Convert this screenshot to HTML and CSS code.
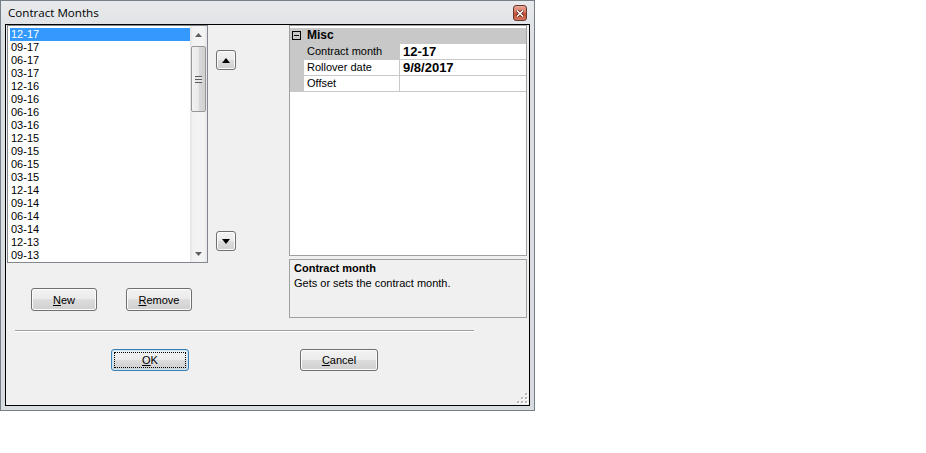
FILE: index.html
```html
<!DOCTYPE html>
<html>

<head>
    <title>Contract Months</title>
    <link rel="stylesheet" href="styles.css">
</head>

<body>
    <div class="window">
        <div class="titlebar">
            <span class="title">Contract Months</span>
            <span class="close-btn">
                <svg width="8" height="7" viewBox="0 0 8 7">
                    <path d="M1 0.5 L7 6.5 M7 0.5 L1 6.5" stroke="#4a1a10" stroke-width="3" />
                    <path d="M1 0.5 L7 6.5 M7 0.5 L1 6.5" stroke="#fff" stroke-width="1.6" />
                </svg>
            </span>
        </div>
        <div class="client">
            <div class="top">
                <div class="left-part">
                    <div class="list-row">
                        <div class="listbox">
                            <ul class="items">
                                <li class="selected">12-17</li>
                                <li>09-17</li>
                                <li>06-17</li>
                                <li>03-17</li>
                                <li>12-16</li>
                                <li>09-16</li>
                                <li>06-16</li>
                                <li>03-16</li>
                                <li>12-15</li>
                                <li>09-15</li>
                                <li>06-15</li>
                                <li>03-15</li>
                                <li>12-14</li>
                                <li>09-14</li>
                                <li>06-14</li>
                                <li>03-14</li>
                                <li>12-13</li>
                                <li>09-13</li>
                            </ul>
                            <div class="scrollbar">
                                <div class="sb-arrow">
                                    <svg width="7" height="4" viewBox="0 0 7 4"><path d="M0 4 L3.5 0 L7 4 Z" fill="#606060" /></svg>
                                </div>
                                <div class="sb-track">
                                    <div class="sb-thumb"><span class="grip-lines"></span></div>
                                </div>
                                <div class="sb-arrow">
                                    <svg width="7" height="4" viewBox="0 0 7 4"><path d="M0 0 L3.5 4 L7 0 Z" fill="#606060" /></svg>
                                </div>
                            </div>
                        </div>
                        <div class="move-buttons">
                            <button class="btn arrow-btn move-up">
                                <svg width="8" height="5" viewBox="0 0 8 5"><path d="M0 5 L4 0 L8 5 Z" fill="#000" /></svg>
                            </button>
                            <button class="btn arrow-btn move-down">
                                <svg width="8" height="5" viewBox="0 0 8 5"><path d="M0 0 L4 5 L8 0 Z" fill="#000" /></svg>
                            </button>
                        </div>
                    </div>
                    <div class="list-buttons">
                        <button class="btn small-btn"><u>N</u>ew</button>
                        <button class="btn small-btn"><u>R</u>emove</button>
                    </div>
                </div>
                <div class="right-part">
                    <div class="propgrid">
                        <div class="pg-row pg-category">
                            <span class="pg-margin"><span class="expander"></span></span>
                            <span class="pg-cat-name">Misc</span>
                        </div>
                        <div class="pg-row pg-selected">
                            <span class="pg-margin"></span>
                            <span class="pg-label">Contract month</span>
                            <span class="pg-value">12-17</span>
                        </div>
                        <div class="pg-row">
                            <span class="pg-margin"></span>
                            <span class="pg-label">Rollover date</span>
                            <span class="pg-value">9/8/2017</span>
                        </div>
                        <div class="pg-row">
                            <span class="pg-margin"></span>
                            <span class="pg-label">Offset</span>
                            <span class="pg-value"></span>
                        </div>
                    </div>
                    <div class="description">
                        <div class="desc-title">Contract month</div>
                        <div class="desc-text">Gets or sets the contract month.</div>
                    </div>
                </div>
            </div>
            <div class="separator"></div>
            <div class="dialog-buttons">
                <button class="btn dialog-btn default-btn"><u>O</u>K</button>
                <button class="btn dialog-btn"><u>C</u>ancel</button>
            </div>
            <div class="size-grip">
                <svg width="11" height="11" viewBox="0 0 11 11">
                    <g fill="#fff">
                        <rect x="9" y="1" width="2" height="2" />
                        <rect x="9" y="5" width="2" height="2" />
                        <rect x="5" y="5" width="2" height="2" />
                        <rect x="9" y="9" width="2" height="2" />
                        <rect x="5" y="9" width="2" height="2" />
                        <rect x="1" y="9" width="2" height="2" />
                    </g>
                    <g fill="#b8b8b8">
                        <rect x="8" y="0" width="2" height="2" />
                        <rect x="8" y="4" width="2" height="2" />
                        <rect x="4" y="4" width="2" height="2" />
                        <rect x="8" y="8" width="2" height="2" />
                        <rect x="4" y="8" width="2" height="2" />
                        <rect x="0" y="8" width="2" height="2" />
                    </g>
                </svg>
            </div>
        </div>
    </div>
</body>

</html>
```

FILE: styles.css
```css
body {
    margin: 0;
    background: #fff;
    font-family: "Liberation Sans", Arial, sans-serif;
    font-size: 11px;
    color: #000;
}

/* window frame */

.window {
    width: 535px;
    height: 411px;
    box-sizing: border-box;
    border: 1px solid #767e88;
    padding: 0 4px 4px;
    display: flex;
    flex-direction: column;
    background: linear-gradient(to bottom, #e8eaec, #dcdfe2 40px, #d8dbdf);
}

.titlebar {
    height: 23px;
    display: flex;
    align-items: flex-start;
    justify-content: space-between;
}

.title {
    font-family: "Segoe UI", "Open Sans", sans-serif;
    font-size: 11.6px;
    line-height: 16px;
    margin: 4px 0 0 3px;
}

.close-btn {
    width: 14px;
    height: 16px;
    box-sizing: border-box;
    margin: 4px 3px 0 0;
    border: 1px solid #6b3a32;
    border-radius: 3px;
    background: linear-gradient(to bottom, #e9a99a, #d6725c 45%, #c24c31 55%, #d2765d);
    display: flex;
    align-items: center;
    justify-content: center;
}

.client {
    flex: 1;
    border: 1px solid #000;
    background: #f0f0f0;
    position: relative;
}

/* top area */

.top {
    display: flex;
}

.left-part {
    width: 283px;
}

.list-row {
    display: flex;
    margin-left: 1px;
}

.listbox {
    width: 201px;
    height: 238px;
    box-sizing: border-box;
    border: 1px solid #828790;
    background: #fff;
    display: flex;
}

.items {
    flex: 1;
    list-style: none;
    margin: 0;
    padding: 2px 0 0 2px;
    overflow: hidden;
}

.items li {
    height: 13px;
    line-height: 13px;
    padding-left: 1px;
}

.items li.selected {
    background: #3399ff;
    color: #fff;
}

.scrollbar {
    width: 17px;
    display: flex;
    flex-direction: column;
    background: linear-gradient(to right, #e3e3e3, #f2f2f2 3px, #f4f4f4 14px, #e6e6e6);
}

.sb-arrow {
    height: 17px;
    display: flex;
    align-items: center;
    justify-content: center;
}

.sb-track {
    flex: 1;
}

.sb-thumb {
    height: 66px;
    margin: 3px 1px 0;
    box-sizing: border-box;
    border: 1px solid #979797;
    border-radius: 2px;
    background: linear-gradient(to right, #f3f3f3, #e8e8e8 50%, #d9d9d9 51%, #d0d0d0);
    display: flex;
    align-items: center;
    justify-content: center;
}

.grip-lines {
    width: 7px;
    height: 7px;
    background: repeating-linear-gradient(to bottom, #5a5a5a 0, #5a5a5a 1px, #e8e8e8 1px, #e8e8e8 3px);
}

.move-buttons {
    margin-left: 8px;
    display: flex;
    flex-direction: column;
}

/* buttons */

.btn {
    font-family: "Liberation Sans", Arial, sans-serif;
    font-size: 11px;
    color: #000;
    box-sizing: border-box;
    border: 1px solid #707070;
    border-radius: 3px;
    background: linear-gradient(to bottom, #f2f2f2, #ebebeb 49%, #dddddd 50%, #cfcfcf);
    box-shadow: inset 0 0 0 1px #fbfbfb;
    padding: 0;
    position: relative;
    display: flex;
    align-items: center;
    justify-content: center;
}

.arrow-btn {
    width: 20px;
    height: 20px;
}

.move-up {
    margin-top: 25px;
}

.move-down {
    margin-top: 161px;
}

.list-buttons {
    display: flex;
    gap: 29px;
    margin-top: 25px;
    padding-left: 25px;
}

.small-btn {
    width: 66px;
    height: 23px;
}

/* property grid */

.right-part {
    width: 238px;
    display: flex;
    flex-direction: column;
}

.propgrid {
    height: 231px;
    box-sizing: border-box;
    border: 1px solid #a0a0a0;
    background: #fff;
    padding-top: 2px;
}

.pg-row {
    display: grid;
    grid-template-columns: 14px 96px 1fr;
    height: 16px;
}

.pg-row span {
    line-height: 15px;
}

.pg-margin {
    background: #c8c8c8;
    position: relative;
}

.pg-label,
.pg-value {
    border-bottom: 1px solid #c8c8c8;
    padding-left: 3px;
    white-space: nowrap;
    overflow: hidden;
}

.pg-label {
    border-right: 1px solid #c8c8c8;
}

.pg-value {
    font-weight: bold;
    font-size: 13px;
}

.pg-selected .pg-label {
    background: #c8c8c8;
}

.pg-category {
    grid-template-columns: 14px 1fr;
    background: #c8c8c8;
}

.pg-cat-name {
    font-weight: bold;
    font-size: 12px;
    padding-left: 3px;
}

.expander {
    position: absolute;
    left: 2px;
    top: 3px;
    width: 9px;
    height: 9px;
    box-sizing: border-box;
    border: 1px solid #000;
    background: #c8c8c8;
}

.expander::after {
    content: "";
    position: absolute;
    left: 1px;
    top: 3px;
    width: 5px;
    height: 1px;
    background: #000;
}

.description {
    margin-top: 3px;
    height: 59px;
    box-sizing: border-box;
    border: 1px solid #a0a0a0;
    padding: 1px 4px;
    line-height: 14px;
}

.desc-title {
    font-weight: bold;
}

.desc-text {
    margin-top: 1px;
}

/* bottom */

.separator {
    margin: 12px 0 0 9px;
    width: 459px;
    border-top: 1px solid #a0a0a0;
    border-bottom: 1px solid #fff;
}

.dialog-buttons {
    display: flex;
    gap: 111px;
    margin-top: 17px;
    padding-left: 105px;
}

.dialog-btn {
    width: 78px;
    height: 22px;
}

.default-btn {
    border-color: #3c7fb1;
    box-shadow: inset 0 0 0 1px #c8e6fa;
}

.default-btn::after {
    content: "";
    position: absolute;
    inset: 2px;
    border: 1px dotted #000;
}

.size-grip {
    position: absolute;
    right: 1px;
    bottom: 1px;
    width: 11px;
    height: 11px;
}
```
